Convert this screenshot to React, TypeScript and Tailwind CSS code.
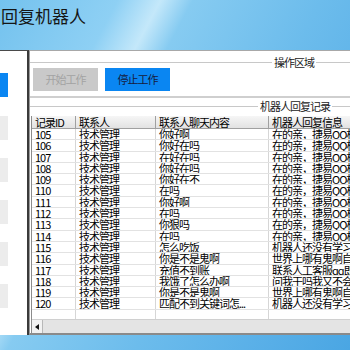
const rows: [string, string, string, string][] = [
  ["105", "技术管理", "你好啊", "在的亲，捷易QQ机器人"],
  ["106", "技术管理", "你好在吗", "在的亲，捷易QQ机器人"],
  ["107", "技术管理", "在好在吗", "在的亲，捷易QQ机器人"],
  ["108", "技术管理", "你好在吗", "在的亲，捷易QQ机器人"],
  ["109", "技术管理", "你好在不", "在的亲，捷易QQ机器人"],
  ["110", "技术管理", "在吗", "在的亲，捷易QQ机器人"],
  ["111", "技术管理", "你好啊", "在的亲，捷易QQ机器人"],
  ["112", "技术管理", "在吗", "在的亲，捷易QQ机器人"],
  ["113", "技术管理", "你狠吗", "在的亲，捷易QQ机器人"],
  ["114", "技术管理", "在吗", "在的亲，捷易QQ机器人"],
  ["115", "技术管理", "怎么吃饭", "机器人还没有学习"],
  ["116", "技术管理", "你是不是鬼啊", "世界上哪有鬼啊自"],
  ["117", "技术管理", "充值不到账", "联系人工客服qq即"],
  ["118", "技术管理", "我饿了怎么办啊", "问我干吗我又不会"],
  ["119", "技术管理", "你是不是鬼啊", "世界上哪有鬼啊自"],
  ["120", "技术管理", "匹配不到关键词怎...", "机器人还没有学习"],
];

function GroupLabel({ text, tail }: { text: string; tail: string }) {
  // WinForms-style group box caption sitting on the right of its line
  return (
    <div className="flex items-center h-[10px]">
      <div className="flex-1 h-px bg-[#c8c8c8]" />
      <span className="px-[2px] text-[11px] leading-[10px] tracking-[-1px] text-[#222] whitespace-nowrap">{text}</span>
      <div className={`${tail} h-px bg-[#c8c8c8]`} />
    </div>
  );
}

export default function App() {
  return (
    <div className="w-[350px] h-[350px] overflow-hidden bg-[linear-gradient(118deg,#74c2ee_0%,#8ed0f4_22%,#c4e8fa_30%,#86cbf1_36%,#6cbcec_60%,#57aee7_85%,#4aa6e3_100%)] font-['Noto_Sans_CJK_SC','Noto_Sans',sans-serif]">
      {/* ─── Title bar ─── */}
      <div className="h-[50px] pl-[1px] pt-[5px] text-[17px] leading-[22px] text-[#151515]">回复机器人</div>

      {/* ─── Window body ─── */}
      <div className="flex h-[285px]">
        {/* left nav, mostly cut off */}
        <div className="w-[29px] shrink-0 bg-white border-t border-[#4a4a4a] border-r-2 border-r-[#3a3a3a] flex flex-col pt-[22px]">
          <div className="w-[8px] h-[24px] bg-[#0a86f2]" />
          <div className="w-[8px] h-[24px] mt-[19px] bg-[#ececec]" />
          <div className="w-[8px] h-[24px] mt-[18px] bg-[#ececec]" />
          <div className="w-[8px] h-[24px] mt-[18px] bg-[#ececec]" />
          <div className="w-[8px] h-[24px] mt-[18px] bg-[#ececec]" />
          <div className="w-[8px] h-[24px] mt-[18px] bg-[#ececec]" />
        </div>

        {/* main area */}
        <div className="flex-1 min-w-0 overflow-hidden flex flex-col bg-white border-t border-[#a8a8a8] border-l border-l-[#9a9a9a] border-b-2 border-b-[#8a8a8a]">
          {/* 操作区域 */}
          <div className="pt-[6px] pb-[5px] border-b-2 border-[#cfcfcf]">
            <GroupLabel text="操作区域" tail="w-[34px]" />
            <div className="flex gap-[7px] pl-[3px] mt-[1px]">
              <button className="w-[65px] h-[23px] bg-[#c9c9c9] text-[#a3a3a3] text-[11px] tracking-[-1px]">开始工作</button>
              <button className="w-[65px] h-[23px] bg-[#0a86f2] text-[#161a3a] text-[11px] tracking-[-1px]">停止工作</button>
            </div>
          </div>

          {/* 机器人回复记录 */}
          <div className="pt-[3px] flex-1 min-h-0 flex flex-col">
            <GroupLabel text="机器人回复记录" tail="w-[18px]" />
            <div className="mt-[5px] ml-[1px] flex-1 min-h-0 flex flex-col border-l border-[#8c8c8c] text-[11px] tracking-[-1px] text-black">
              <div className="flex shrink-0 h-[13px] leading-[13px] overflow-hidden bg-[linear-gradient(#f6f6f6,#e2e2e2)] border-b border-[#a0a0a0] pl-[2px]">
                <div className="w-[42px] shrink-0 pl-[1px] border-r border-[#a0a0a0]">记录ID</div>
                <div className="w-[80px] shrink-0 pl-[3px] border-r border-[#a0a0a0]">联系人</div>
                <div className="w-[113px] shrink-0 pl-[3px] border-r border-[#a0a0a0]">联系人聊天内容</div>
                <div className="w-[90px] shrink-0 pl-[3px] whitespace-nowrap overflow-hidden">机器人回复信息</div>
              </div>
              {rows.map((r) => (
                <div key={r[0]} className="flex shrink-0 h-[11.3px] leading-[11px] overflow-hidden border-b border-[#e2e2e2] pl-[2px]">
                  <div className="w-[42px] shrink-0 pl-[1px] border-r border-[#d6d6d6]">{r[0]}</div>
                  <div className="w-[80px] shrink-0 pl-[3px] border-r border-[#d6d6d6]">{r[1]}</div>
                  <div className="w-[113px] shrink-0 pl-[3px] border-r border-[#d6d6d6] whitespace-nowrap overflow-hidden">{r[2]}</div>
                  <div className="w-[90px] shrink-0 pl-[3px] whitespace-nowrap overflow-hidden">{r[3]}</div>
                </div>
              ))}
              <div className="flex flex-1 pl-[2px]">
                <div className="w-[42px] shrink-0 border-r border-[#d6d6d6]" />
                <div className="w-[80px] shrink-0 border-r border-[#d6d6d6]" />
                <div className="w-[113px] shrink-0 border-r border-[#d6d6d6]" />
              </div>
              {/* horizontal scrollbar */}
              <div className="flex shrink-0 h-[14px] bg-[#e4e4e4] border-t border-[#d0d0d0]">
                <div className="w-[11px] flex items-center justify-center bg-[#f2f2f2] border-r border-[#b8b8b8]">
                  <svg width="4" height="6" viewBox="0 0 4 6"><path d="M4 0 L0 3 L4 6 Z" fill="#111" /></svg>
                </div>
                <div className="flex-1" />
              </div>
            </div>
          </div>
        </div>
      </div>
    </div>
  );
}
